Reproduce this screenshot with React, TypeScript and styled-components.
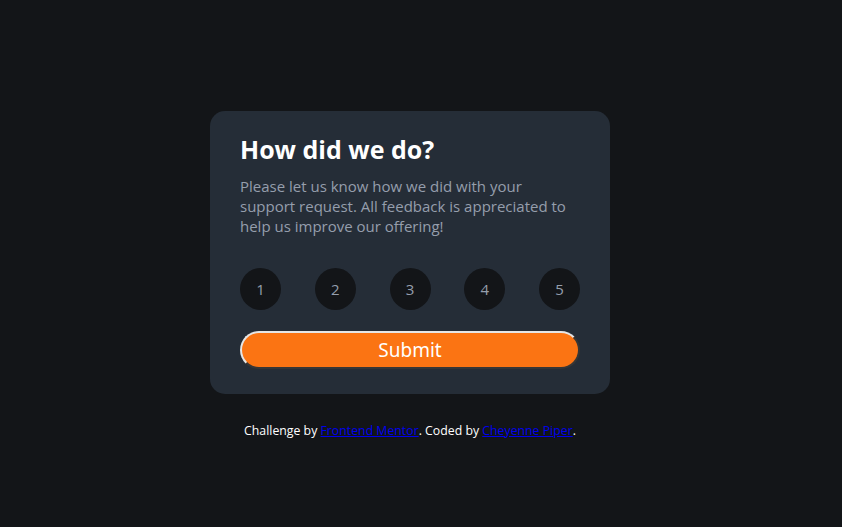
import React from "react";
import styled, { createGlobalStyle } from "styled-components";

const GlobalStyle = createGlobalStyle`
  html, body {
    margin: 0;
    background-color: #131518;
    font-family: "Open Sans", "Liberation Sans", sans-serif;
  }
`;

const ratings = [1, 2, 3, 4, 5];

const App = () => {
  return (
    <Page>
      <GlobalStyle />
      <Card>
        <Title>How did we do?</Title>
        <Text>
          Please let us know how we did with your support request. All feedback
          is appreciated to help us improve our offering!
        </Text>
        <Ratings>
          {ratings.map((n) => (
            <Rate key={n}>{n}</Rate>
          ))}
        </Ratings>
        <Submit>Submit</Submit>
      </Card>
      <Footer>
        Challenge by <a href="#">Frontend Mentor</a>. Coded by{" "}
        <a href="#">Cheyenne Piper</a>.
      </Footer>
    </Page>
  );
};

export default App;

const Page = styled.main`
  width: 820px;
  height: 527px;
  display: flex;
  flex-direction: column;
  align-items: center;
  padding-top: 111px;
  box-sizing: border-box;
`;

const Card = styled.div`
  width: 400px;
  box-sizing: border-box;
  background-color: #252d37;
  border-radius: 15px;
  padding: 22px 30px 25px;
`;

const Title = styled.h1`
  margin: 0;
  color: #ffffff;
  font-size: 25px;
  font-weight: 700;
  line-height: 32px;
`;

const Text = styled.p`
  margin: 11px 0 0;
  color: #959eac;
  font-size: 15px;
  line-height: 20px;
`;

const Ratings = styled.div`
  display: flex;
  justify-content: space-between;
  margin-top: 32px;
`;

const Rate = styled.div`
  width: 41px;
  height: 42px;
  border-radius: 50%;
  background-color: #131518;
  color: #959eac;
  font-size: 15px;
  display: flex;
  align-items: center;
  justify-content: center;
`;

const Submit = styled.button`
  display: block;
  width: 100%;
  height: 38px;
  margin-top: 21px;
  background-color: #fb7413;
  color: #ffffff;
  border: 2px outset #e6e6e6;
  border-right-color: #8a8a8a;
  border-bottom-color: #8a8a8a;
  border-radius: 20px;
  font-family: "Noto Sans", sans-serif;
  font-size: 19px;
  padding: 0;
`;

const Footer = styled.div`
  margin-top: 28px;
  color: #ffffff;
  font-size: 12.3px;

  a {
    color: #0000ee;
    text-decoration: underline;
  }
`;
